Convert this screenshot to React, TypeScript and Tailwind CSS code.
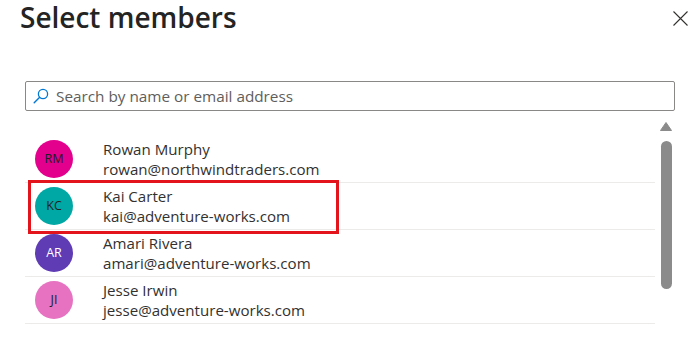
const members = [
  {
    id: 1,
    initials: "RM",
    name: "Rowan Murphy",
    email: "rowan@northwindtraders.com",
    avatar: "bg-[#e3008c] text-[#201f1e]",
  },
  {
    id: 2,
    initials: "KC",
    name: "Kai Carter",
    email: "kai@adventure-works.com",
    avatar: "bg-[#00a8a5] text-[#201f1e]",
    highlight: true,
  },
  {
    id: 3,
    initials: "AR",
    name: "Amari Rivera",
    email: "amari@adventure-works.com",
    avatar: "bg-[#5f3bb4] text-white",
  },
  {
    id: 4,
    initials: "JI",
    name: "Jesse Irwin",
    email: "jesse@adventure-works.com",
    avatar: "bg-[#e672c1] text-[#201f1e]",
  },
];

const App = () => {
  return (
    <div className="w-[700px] h-[350px] overflow-hidden bg-white text-[#323130] font-['Open_Sans',sans-serif]">
      {/* header */}
      <div className="flex items-start justify-between pl-5 pr-[12px] pt-[1px]">
        <h1 className="text-[28px] font-semibold leading-[33px] text-[#242424]">
          Select members
        </h1>
        <button className="mt-[10px] text-[#323130]" aria-label="Close">
          <svg width="15" height="15" viewBox="0 0 15 15">
            <path d="M0.5 0.5L14.5 14.5M14.5 0.5L0.5 14.5" stroke="currentColor" strokeWidth="1.1" />
          </svg>
        </button>
      </div>

      {/* search */}
      <div className="mt-[47px] ml-[25px] w-[650px] h-[30px] border border-[#8a8886] rounded-[2px] flex items-center">
        <svg className="ml-[7px]" width="16" height="16" viewBox="0 0 16 16" fill="none">
          <circle cx="10" cy="6" r="4.6" stroke="#0078d4" strokeWidth="1.3" />
          <path d="M6.7 9.3L1.2 14.8" stroke="#0078d4" strokeWidth="1.4" strokeLinecap="round" />
        </svg>
        <span className="ml-[7px] text-[15.3px] text-[#605e5c]">
          Search by name or email address
        </span>
      </div>

      {/* list */}
      <div className="mt-[8px] flex">
        <ul className="ml-[25px] w-[630px] pt-[17px]">
          {members.map((m) => (
            <li
              key={m.id}
              className="relative h-[47px] border-b border-[#edebe9] flex items-center"
            >
              <div
                className={`ml-[10px] w-[38px] h-[38px] rounded-full flex items-center justify-center text-[12.5px] ${m.avatar}`}
              >
                {m.initials}
              </div>
              <div className="ml-[30px] text-[15.1px] leading-[20px]">
                <div>{m.name}</div>
                <div>{m.email}</div>
              </div>
              {m.highlight && (
                <div className="absolute left-[3px] -top-[3px] w-[311px] h-[54px] border-[3px] border-[#e3141b]" />
              )}
            </li>
          ))}
        </ul>
        <div className="ml-[5px] w-[12px] flex flex-col items-center pt-[3px]">
          <svg width="12" height="9" viewBox="0 0 12 9">
            <path d="M6 0.5L11.5 8.5H0.5Z" fill="#8b8b8b" stroke="#8b8b8b" strokeLinejoin="round" />
          </svg>
          <div className="mt-[10px] w-[11px] h-[148px] rounded-full bg-[#8b8b8b]" />
        </div>
      </div>
    </div>
  );
};

export default App;
